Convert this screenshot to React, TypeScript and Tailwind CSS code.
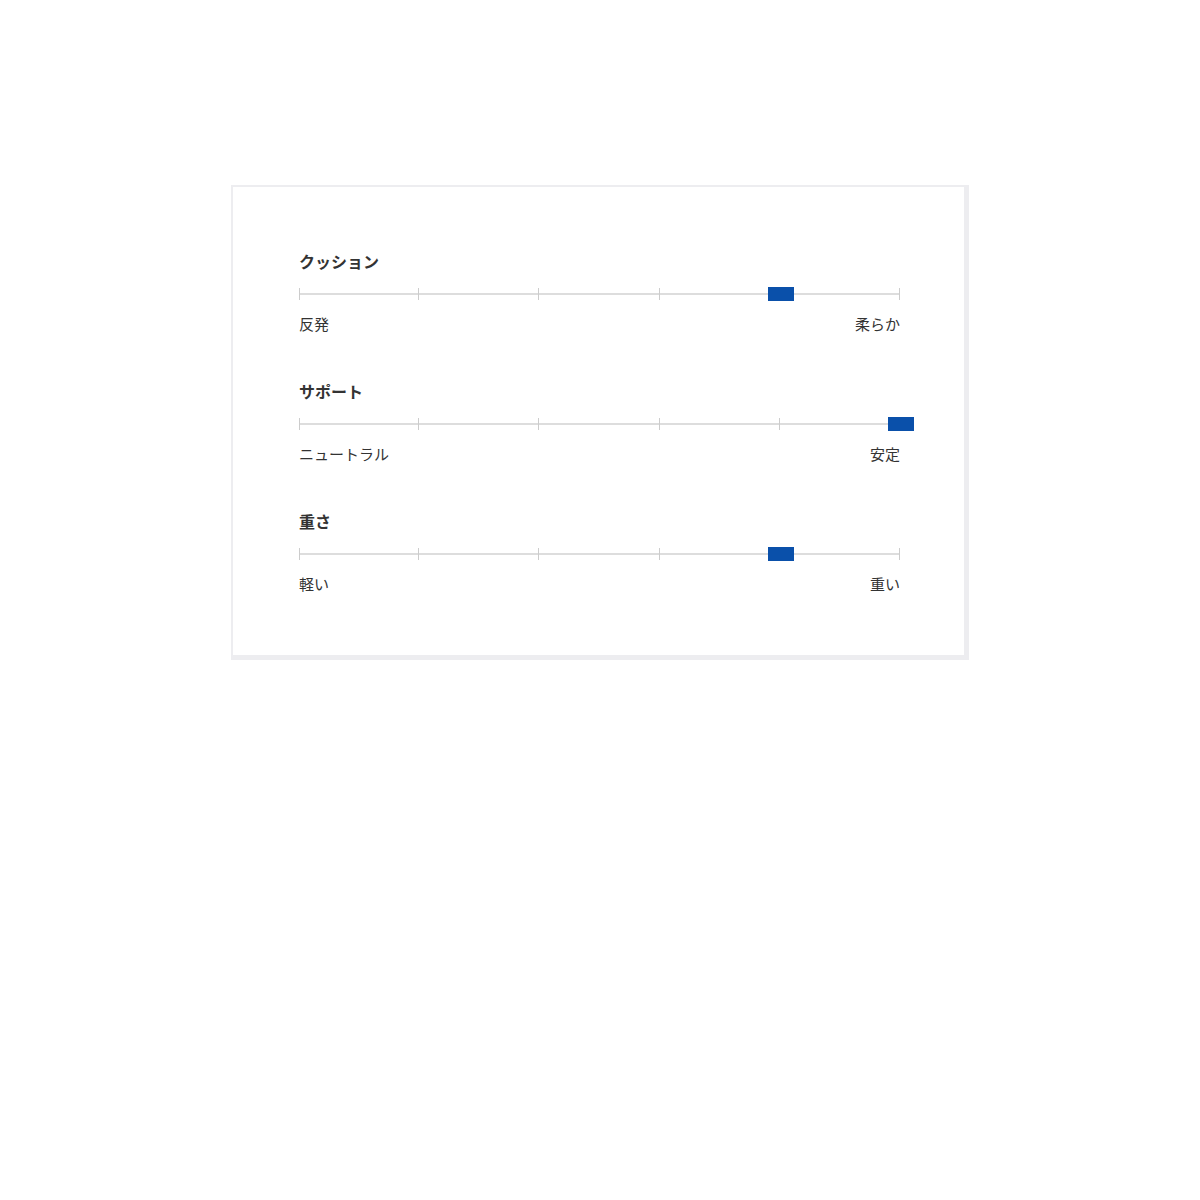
import React from "react";

const rows = [
  { title: "クッション", left: "反発", right: "柔らか", value: 4 },
  { title: "サポート", left: "ニュートラル", right: "安定", value: 5 },
  { title: "重さ", left: "軽い", right: "重い", value: 4 },
];

function Track({ value }: { value: number }) {
  const ticks = [0, 1, 2, 3, 4, 5];
  return (
    <div className="relative h-[14px] w-full">
      <div className="absolute left-0 right-0 top-[6px] h-[2px] bg-[#dddddd]" />
      {ticks.map((t) => (
        <div
          key={t}
          className="absolute top-[1px] h-[12px] w-[1px] bg-[#cccccc]"
          style={{ left: `calc(${(t / 5) * 100}% - ${t === 0 ? 0 : 1}px)` }}
        />
      ))}
      <div
        className="absolute top-0 h-[14px] w-[26px] bg-[#0a50aa]"
        style={{ left: `calc(${(value / 5) * 100}% - 12px)` }}
      />
    </div>
  );
}

export default function App() {
  return (
    <div
      className="min-h-[1200px] bg-white pt-[185px]"
      style={{ fontFamily: '"Noto Sans CJK JP", "Noto Sans", sans-serif' }}
    >
      <div className="mx-auto w-[738px] border-t-2 border-l-2 border-r-[5px] border-b-[5px] border-[#ededf0] bg-white pl-[66px] pr-[64px] pt-[62px] pb-[60px]">
        <div className="flex flex-col gap-[44px]">
          {rows.map((r) => (
            <div key={r.title} className="flex flex-col">
              <div className="text-base leading-6 font-bold text-[#333333]">{r.title}</div>
              <div className="mt-[14px]">
                <Track value={r.value} />
              </div>
              <div className="mt-[13px] mb-px flex justify-between text-[15px] leading-5 text-[#333333]">
                <span>{r.left}</span>
                <span>{r.right}</span>
              </div>
            </div>
          ))}
        </div>
      </div>
    </div>
  );
}
